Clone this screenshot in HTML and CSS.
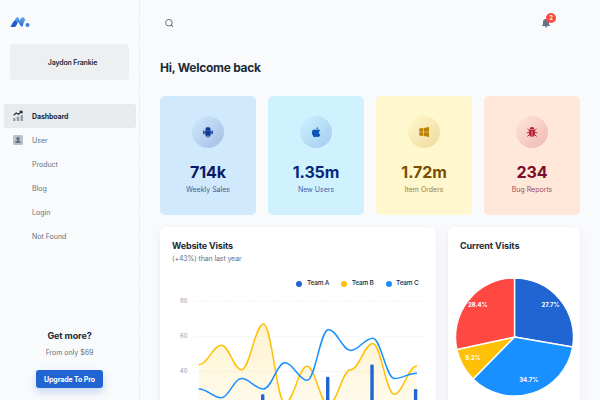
FILE: index.html
```html
<!DOCTYPE html>
<html lang="en">
<head>
<meta charset="utf-8">
<title>Dashboard</title>
<link rel="stylesheet" href="styles.css">
</head>
<body>
<div class="app">
  <aside class="sidebar">
    <svg class="logo" viewBox="0 0 20 12">
      <defs><linearGradient id="lg" x1="0" y1="0" x2="0" y2="1"><stop offset="0" stop-color="#68acf3"/><stop offset="1" stop-color="#2065d1"/></linearGradient></defs>
      <path d="M5.8 2.2Q6.3 1.2 7.4 1.2Q8.5 1.2 8.9 2.2L9.7 4.5L11 2.2Q11.7 1.2 12.9 1.2Q14 1.2 14.4 2.2L15.4 4.6Q14.4 5 13.9 6L12.8 9.8Q11.7 11 10.6 9.9L8.2 6L6.2 9.4Q5.3 10.9 3.7 10.9H1.1Q.6 10.9 .9 10.2Z" fill="url(#lg)"/>
      <path d="M2.8 6.8Q4.8 3.8 6.3 5.4L7.2 7.4L6.1 9.4Q5.3 10.9 3.7 10.9H1.1Q.6 10.9 .9 10.2Z" fill="#1c5dcb"/>
      <circle cx="17.5" cy="9" r="2" fill="#3d82e2"/>
    </svg>
    <div class="account">Jaydon Frankie</div>
    <nav class="nav">
      <a class="nav-item active"><svg class="nav-icon" viewBox="0 0 12 12"><path d="M1 8.5Q1 8 1.5 8H3Q3.5 8 3.5 8.5V11H1ZM4.7 7Q4.7 6.5 5.2 6.5H6.7Q7.2 6.5 7.2 7V11H4.7ZM8.5 5.5Q8.5 5 9 5H10.5Q11 5 11 5.5V11H8.5Z" fill="#969ea5"/><path d="M1.7 5.2L4.2 3L6.4 4.3L9.8 1.5M7.7 1.3H10V3.5" fill="none" stroke="#212b36" stroke-width="1.15"/></svg>Dashboard</a>
      <a class="nav-item"><svg class="nav-icon" viewBox="0 0 12 12"><rect x="1" y="1" width="10" height="10" rx="1.5" fill="#bac3cb"/><circle cx="6" cy="4.5" r="1.7" fill="#637381"/><path d="M5 5H7V6.7L8.7 7.5V9H3.3V7.5L5 6.7Z" fill="#637381"/></svg>User</a>
      <a class="nav-item"><span class="nav-icon"></span>Product</a>
      <a class="nav-item"><span class="nav-icon"></span>Blog</a>
      <a class="nav-item"><span class="nav-icon"></span>Login</a>
      <a class="nav-item"><span class="nav-icon"></span>Not Found</a>
    </nav>
    <div class="promo">
      <h2>Get more?</h2>
      <p>From only $69</p>
      <a class="button">Upgrade To Pro</a>
    </div>
  </aside>
  <main class="main">
    <header class="topbar">
      <svg class="search" viewBox="0 0 10 10"><circle cx="4.9" cy="4.7" r="3.3" fill="none" stroke="#637381" stroke-width="1"/><path d="M7.2 7L8.9 8.7" stroke="#637381" stroke-width="1.1"/></svg>
      <div class="bell">
        <svg viewBox="0 0 10 10"><path d="M5 1Q8 1 8 4V6.4L9 7.5V8H1V7.5L2 6.4V4Q2 1 5 1M3.7 8.3H6.3Q6 9.5 5 9.5Q4 9.5 3.7 8.3" fill="#637381"/></svg>
        <span class="badge">2</span>
      </div>
    </header>
    <h1>Hi, Welcome back</h1>
    <section class="stats">
      <article class="stat blue">
        <div class="stat-icon"><svg viewBox="0 0 12 12"><path d="M3.2 4.2Q3.2 2.5 4.4 1.8L4 1L4.4 .8L4.9 1.5Q6 1.1 7.1 1.5L7.6 .8L8 1L7.6 1.8Q8.8 2.5 8.8 4.2ZM3.2 4.6H8.8V8.9Q8.8 9.4 8.3 9.4H7.7V10.7Q7.7 11.2 7.1 11.2Q6.5 11.2 6.5 10.7V9.4H5.5V10.7Q5.5 11.2 4.9 11.2Q4.3 11.2 4.3 10.7V9.4H3.7Q3.2 9.4 3.2 8.9ZM1.1 5Q1.1 4.4 1.8 4.4Q2.6 4.4 2.6 5V7.6Q2.6 8.2 1.8 8.2Q1.1 8.2 1.1 7.6ZM9.4 5Q9.4 4.4 10.2 4.4Q10.9 4.4 10.9 5V7.6Q10.9 8.2 10.2 8.2Q9.4 8.2 9.4 7.6Z"/></svg></div>
        <strong>714k</strong><span>Weekly Sales</span>
      </article>
      <article class="stat cyan">
        <div class="stat-icon"><svg viewBox="0 0 12 12"><path d="M8.2 .9Q8.3 3 6.1 3.4Q6.1 1.4 8.2 .9M6.2 4Q6.8 4 7.7 3.5Q9.2 3.1 10.1 4.4Q8.8 5.2 8.9 6.7Q9 8.1 10.4 8.7Q9.5 11 8.2 11.1Q7.5 11.1 7 10.8Q6.2 10.5 5.4 10.9Q4.3 11.5 3.4 10.5Q1.5 8.2 1.9 5.8Q2.4 3.6 4.3 3.5Q5 3.5 6.2 4"/></svg></div>
        <strong>1.35m</strong><span>New Users</span>
      </article>
      <article class="stat yellow">
        <div class="stat-icon"><svg viewBox="0 0 12 12"><path d="M1.3 2.6L5.3 2V5.7H1.3ZM5.9 1.9L11 1.1V5.7H5.9ZM1.3 6.3H5.3V10L1.3 9.4ZM5.9 6.3H11V10.9L5.9 10.1Z"/></svg></div>
        <strong>1.72m</strong><span>Item Orders</span>
      </article>
      <article class="stat red">
        <div class="stat-icon"><svg viewBox="0 0 12 12"><path d="M3.6 3.3Q3.6 .9 6 .9Q8.4 .9 8.4 3.3ZM3.2 3.8H5.7V11Q3.1 10.6 3 8ZM6.3 3.8H8.8L9 8Q8.9 10.6 6.3 11Z"/><path d="M1.4 2.8L3.2 4.5H8.8L10.6 2.8M.8 6.7H3.4M8.6 6.7H11.2M1.4 10.4L3.6 8.6M10.6 10.4L8.4 8.6" fill="none" stroke="#b72136" stroke-width=".95"/></svg></div>
        <strong>234</strong><span>Bug Reports</span>
      </article>
    </section>
    <section class="charts">
      <article class="panel visits">
        <h3>Website Visits</h3>
        <p>(+43%) than last year</p>
        <div class="legend"><span class="team a">Team A</span><span class="team b">Team B</span><span class="team c">Team C</span></div>
        <svg class="plot" id="visits" viewBox="0 0 276 160">
          <defs><linearGradient id="area" x1="0" y1="0" x2="0" y2="1"><stop offset="0" stop-color="#ffc107" stop-opacity=".19"/><stop offset="1" stop-color="#ffc107" stop-opacity=".03"/></linearGradient></defs>
        </svg>
      </article>
      <article class="panel current">
        <h3>Current Visits</h3>
        <svg class="pie" id="pie" viewBox="0 0 132 120"></svg>
      </article>
    </section>
  </main>
</div>
<script src="charts.js"></script>
</body>
</html>
```
FILE: styles.css
```css
* { box-sizing: border-box; }
body { margin: 0; background: #f9fafc; color: #212b36; font-family: Inter, "Liberation Sans", sans-serif; overflow: hidden; }
h1, h2, h3, p { margin: 0; }
.app { display: flex; width: 600px; height: 400px; overflow: hidden; }
.sidebar { width: 140px; flex: none; background: repeating-linear-gradient(#e3e7ea 0 1.5px, #f3f5f7 1.5px 3px) right / 1px 100% no-repeat; display: flex; flex-direction: column; }
.logo { width: 20px; height: 12px; margin: 16px 0 0 10px; display: block; }
.account { width: 119px; height: 36px; margin: 16px 0 24px 10px; padding-left: 6px; border-radius: 4px; background: #edeff1; display: flex; align-items: center; justify-content: center; font-size: 7px; font-weight: 600; letter-spacing: -.15px; }
.nav { padding: 0 4px; width: 140px; }
.nav-item { display: flex; align-items: center; height: 24px; width: 131.5px; padding-left: 8px; border-radius: 3px; color: #637381; font-size: 7px; }
.nav-item.active { background: #e7ebee; color: #212b36; font-weight: 700; letter-spacing: -.12px; }
.nav-icon { width: 12px; height: 12px; margin-right: 8px; flex: none; }
.promo { width: 139px; margin-top: 80px; display: flex; flex-direction: column; align-items: center; }
.promo h2 { font-size: 9px; line-height: 15px; letter-spacing: -.1px; }
.promo p { font-size: 7px; line-height: 11px; margin-top: 4px; color: #637381; letter-spacing: -.02px; }
.button { width: 67px; height: 18px; margin-top: 12px; background: #2065d1; color: #fff; border-radius: 3px; box-shadow: 0 4px 8px rgba(32,101,209,.24); font-size: 7px; font-weight: 700; display: flex; align-items: center; justify-content: center; white-space: nowrap; letter-spacing: -.12px; }
.main { flex: none; width: 460px; padding-left: 20px; }
.topbar { height: 46px; display: flex; align-items: center; justify-content: space-between; padding: 0 44px 0 4.3px; }
.search { width: 10px; height: 10px; }
.bell { position: relative; width: 10px; height: 10px; margin-right: 5px; }
.bell svg { width: 10px; height: 10px; display: block; }
.badge { position: absolute; left: 5px; top: -5px; width: 10px; height: 10px; border-radius: 50%; background: #ff4842; color: #fff; font-size: 6px; font-weight: 600; line-height: 10px; text-align: center; }
h1 { height: 50px; padding-top: 13px; font-size: 12px; line-height: 18px; letter-spacing: -.26px; }
.stats { width: 420px; display: grid; grid-template-columns: repeat(4, 96px); gap: 12px; }
.stat { height: 119px; border-radius: 5px; display: flex; flex-direction: column; align-items: center; padding-top: 20px; }
.stat-icon { width: 32px; height: 32px; border-radius: 50%; display: flex; align-items: center; justify-content: center; margin-bottom: 12px; }
.stat-icon svg { width: 12px; height: 12px; fill: currentColor; }
.stat strong { font-size: 16px; line-height: 24px; letter-spacing: -.1px; }
.stat > span { font-size: 7px; line-height: 11px; opacity: .72; }
.blue { background: #d1e9fc; color: #061b64; }
.blue .stat-icon { color: #103996; background: linear-gradient(135deg, rgba(16,57,150,0), rgba(16,57,150,.24)); }
.cyan { background: #d0f2ff; color: #04297a; }
.cyan .stat-icon { color: #0c53b7; background: linear-gradient(135deg, rgba(12,83,183,0), rgba(12,83,183,.24)); }
.yellow { background: #fff7cd; color: #7a4f01; }
.yellow .stat-icon { color: #b78103; background: linear-gradient(135deg, rgba(183,129,3,0), rgba(183,129,3,.24)); }
.red { background: #ffe7d9; color: #7a0c2e; }
.red .stat-icon { color: #b72136; background: linear-gradient(135deg, rgba(183,33,54,0), rgba(183,33,54,.24)); }
.charts { width: 420px; display: flex; gap: 12px; margin-top: 12px; }
.panel { background: #fff; border-radius: 6px; height: 230px; padding-top: 12px; box-shadow: 0 0 1px rgba(145,158,171,.2), 0 5px 12px rgba(145,158,171,.12); }
.visits { width: 276px; }
.current { width: 132px; }
h3 { font-size: 9px; line-height: 14px; padding-left: 12px; letter-spacing: -.15px; }
.current h3 { letter-spacing: -.1px; }
.visits p { font-size: 7px; line-height: 11px; padding-left: 12px; color: #637381; letter-spacing: -.12px; }
.legend { display: flex; justify-content: flex-end; gap: 12px; padding-right: 17.5px; margin-top: 14px; height: 11px; align-items: center; font-size: 6.5px; font-weight: 500; line-height: 11px; letter-spacing: -.2px; }
.team { display: flex; align-items: center; gap: 4.5px; }
.team::before { content: ""; width: 6px; height: 6px; border-radius: 50%; background: #2065d1; }
.team.b::before { background: #ffc107; }
.team.c::before { background: #1890ff; }
.plot { display: block; width: 276px; height: 160px; margin-top: 1px; }
.plot text { fill: #919eab; font-size: 6px; text-anchor: end; }
.grid-line { stroke: #e5e9ec; stroke-width: .7; stroke-dasharray: 1.5 1.5; }
.line { fill: none; stroke-width: 1.5; stroke-linecap: round; }
.pie { display: block; width: 132px; height: 120px; margin-top: 24px; }
.pie text { fill: #fff; font-size: 6px; font-weight: 700; text-anchor: middle; }
```
FILE: charts.js
```js
const ns = "http://www.w3.org/2000/svg";
function add(parent, tag, attrs, text) {
  const el = document.createElementNS(ns, tag);
  for (const key in attrs) el.setAttribute(key, attrs[key]);
  if (text) el.textContent = text;
  parent.appendChild(el);
}

const plot = document.getElementById("visits");
const days = [0, 31, 59, 90, 120, 151, 181, 212, 243, 273, 304];
const teamA = [23, 11, 22, 27, 13, 22, 37, 21, 44, 22, 30];
const teamB = [44, 55, 41, 67, 22, 43, 21, 41, 56, 27, 43];
const teamC = [30, 25, 36, 30, 45, 35, 64, 52, 59, 36, 39];
const px = day => 39.2 + day / 304 * 217.2;
const py = value => 11.3 + (80 - value) * 1.755;
function curve(values) {
  return values.map((v, i) => {
    const x = px(days[i]), y = py(v);
    if (!i) return `M${x} ${y}`;
    const x0 = px(days[i - 1]), bend = (x - x0) * .38;
    return `C${x0 + bend} ${py(values[i - 1])} ${x - bend} ${y} ${x} ${y}`;
  }).join("");
}
for (const v of [80, 60, 40]) {
  add(plot, "path", { class: "grid-line", d: `M34 ${py(v)}H263` });
  add(plot, "text", { x: 27.5, y: py(v) + 1.5 }, String(v));
}
add(plot, "path", { d: `${curve(teamB)}V${py(0)}H${px(0)}Z`, fill: "url(#area)" });
teamA.forEach((v, i) => add(plot, "rect", { x: px(days[i]) - 2.5, y: py(v), width: 3.4, height: v * 1.755, rx: 1.2, fill: "#2065d1" }));
add(plot, "path", { class: "line", d: curve(teamB), stroke: "#ffc107" });
add(plot, "path", { class: "line", d: curve(teamC), stroke: "#1890ff" });

const pie = document.getElementById("pie");
const slices = [[27.7, "#2065d1", 102.5, 29.5], [34.7, "#1890ff", 80.8, 104.5], [9.2, "#ffc107", 25, 82.5], [28.4, "#ff4842", 29.8, 30]];
const cx = 66.5, cy = 60, r = 59;
let total = 0;
for (const [share, color] of slices) {
  const point = p => `${cx + r * Math.sin(p * Math.PI / 50)} ${cy - r * Math.cos(p * Math.PI / 50)}`;
  add(pie, "path", { d: `M${cx} ${cy}L${point(total)}A${r} ${r} 0 0 1 ${point(total + share)}Z`, fill: color, stroke: "#fff", "stroke-width": 1.4 });
  total += share;
}
for (const [share, , x, y] of slices) add(pie, "text", { x, y }, share + "%");
```
